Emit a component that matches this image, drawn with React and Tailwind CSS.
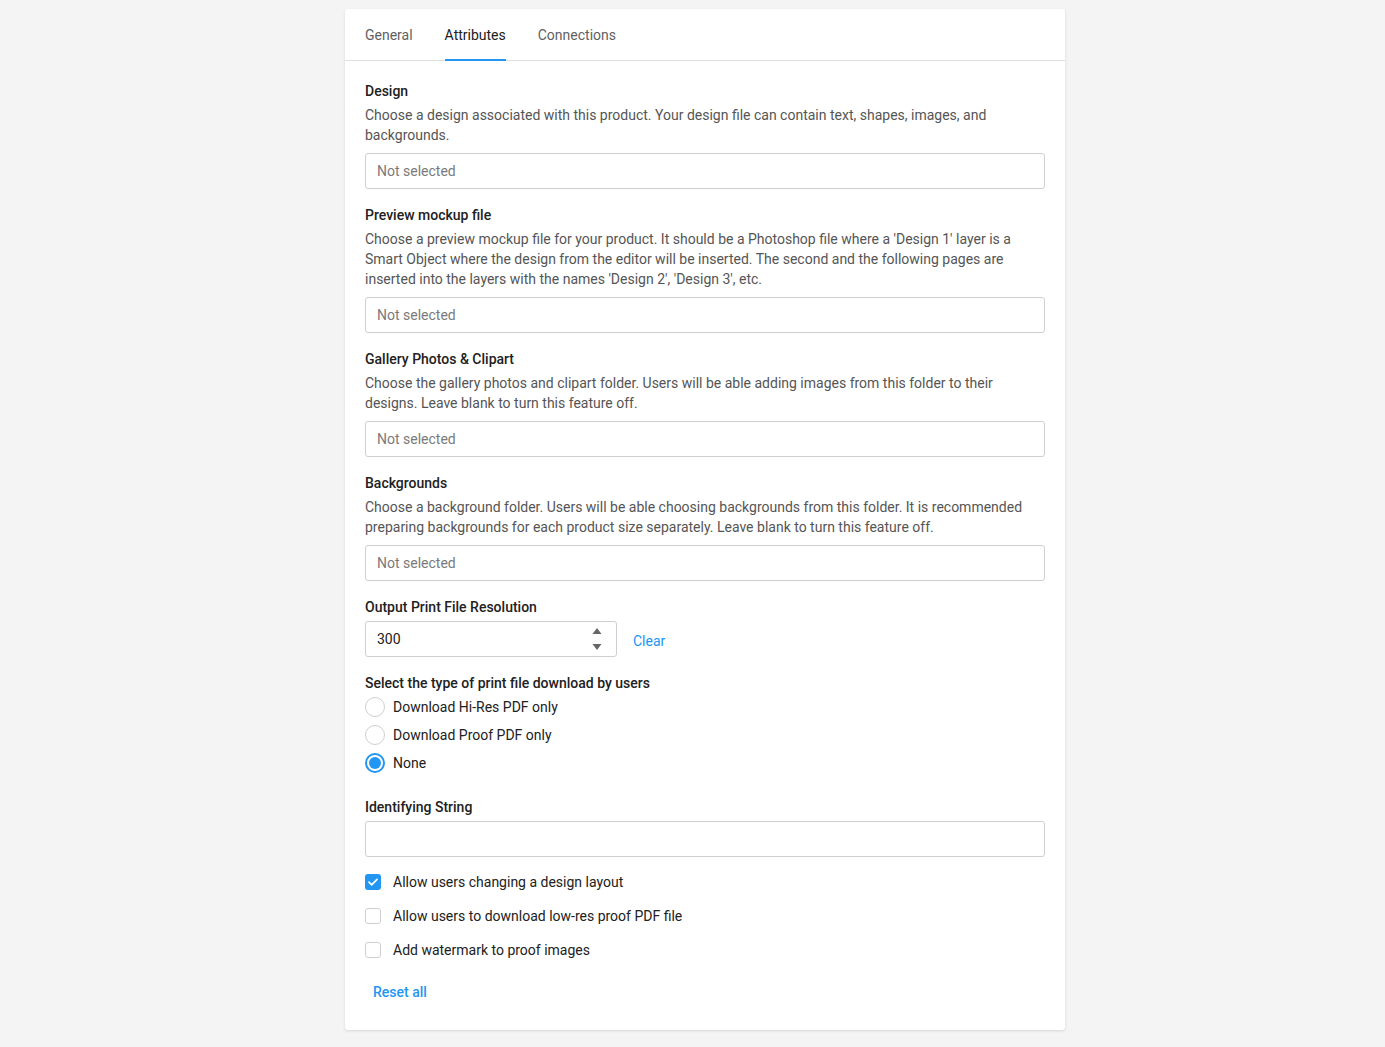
import React, { useState } from 'react';

const SECTIONS = [
  {
    title: 'Design',
    text: 'Choose a design associated with this product. Your design file can contain text, shapes, images, and backgrounds.',
  },
  {
    title: 'Preview mockup file',
    text: "Choose a preview mockup file for your product. It should be a Photoshop file where a 'Design 1' layer is a Smart Object where the design from the editor will be inserted. The second and the following pages are inserted into the layers with the names 'Design 2', 'Design 3', etc.",
  },
  {
    title: 'Gallery Photos & Clipart',
    text: 'Choose the gallery photos and clipart folder. Users will be able adding images from this folder to their designs. Leave blank to turn this feature off.',
  },
  {
    title: 'Backgrounds',
    text: 'Choose a background folder. Users will be able choosing backgrounds from this folder. It is recommended preparing backgrounds for each product size separately. Leave blank to turn this feature off.',
  },
];

const RADIOS = ['Download Hi-Res PDF only', 'Download Proof PDF only', 'None'];

const CHECKS = [
  'Allow users changing a design layout',
  'Allow users to download low-res proof PDF file',
  'Add watermark to proof images',
];

function Radio({ checked, label, onClick }) {
  return (
    <label className="flex items-center h-7 cursor-pointer" onClick={onClick}>
      {checked ? (
        <span className="w-5 h-5 rounded-full border-2 border-[#2196f3] flex items-center justify-center">
          <span className="w-3 h-3 rounded-full bg-[#2196f3]" />
        </span>
      ) : (
        <span className="w-5 h-5 rounded-full border border-[#cfcfcf] bg-white" />
      )}
      <span className="ml-2 text-[#212121]">{label}</span>
    </label>
  );
}

function Check({ checked, label, onClick }) {
  return (
    <label className="flex items-center h-[34px] cursor-pointer" onClick={onClick}>
      {checked ? (
        <span className="w-4 h-4 rounded-[3px] bg-[#2196f3] flex items-center justify-center">
          <svg width="10" height="8" viewBox="0 0 10 8" fill="none">
            <path d="M1 4.2 3.7 6.8 9 1.3" stroke="white" strokeWidth="1.7" strokeLinecap="round" strokeLinejoin="round" />
          </svg>
        </span>
      ) : (
        <span className="w-4 h-4 rounded-[3px] border border-[#cfcfcf] bg-white" />
      )}
      <span className="ml-3 text-[#212121]">{label}</span>
    </label>
  );
}

export default function App() {
  const [tab, setTab] = useState('Attributes');
  const [radio, setRadio] = useState(2);
  const [checks, setChecks] = useState([true, false, false]);

  return (
    <div className="min-h-screen bg-[#f4f4f4] pt-[9px] pb-[17px] font-['Roboto',sans-serif] text-[14px] leading-5">
      <div className="w-[720px] bg-white rounded-[3px] shadow-[0_1px_3px_rgba(0,0,0,0.12)] ml-[345px]">
        <div className="flex gap-8 px-5 h-[52px] border-b border-[#e0e0e0]">
          {['General', 'Attributes', 'Connections'].map(t => (
            <button
              key={t}
              onClick={() => setTab(t)}
              className={
                'relative h-full flex items-center ' +
                (tab === t ? 'text-[#212121]' : 'text-[#616161]')
              }
            >
              {t}
              {tab === t && <span className="absolute left-0 right-0 bottom-[-1px] h-[2px] bg-[#2196f3]" />}
            </button>
          ))}
        </div>

        <div className="px-5 pt-5 pb-[28px]">
          {SECTIONS.map(s => (
            <div key={s.title} className="mb-4">
              <div className="font-medium text-[#212121]">{s.title}</div>
              <p className="mt-1 text-[#555555]">{s.text}</p>
              <div className="mt-2 h-9 border border-[#cfcfcf] rounded-[3px] px-[11px] flex items-center text-[#7a7a7a]">
                Not selected
              </div>
            </div>
          ))}

          <div className="font-medium text-[#212121]">Output Print File Resolution</div>
          <div className="mt-1 flex items-center">
            <div className="w-[252px] h-9 border border-[#cfcfcf] rounded-[3px] pl-[11px] pr-[14px] flex items-center justify-between text-[#212121]">
              <span>300</span>
              <svg width="10" height="24" viewBox="0 0 10 24" fill="#666">
                <path d="M5 1 9.5 7H0.5Z" />
                <path d="M5 23 9.5 17H0.5Z" />
              </svg>
            </div>
            <button className="ml-4 text-[#2196f3] mt-[4px]">Clear</button>
          </div>

          <div className="mt-4 font-medium text-[#212121]">Select the type of print file download by users</div>
          <div>
            {RADIOS.map((r, i) => (
              <Radio key={r} label={r} checked={radio === i} onClick={() => setRadio(i)} />
            ))}
          </div>

          <div className="mt-5 font-medium text-[#212121]">Identifying String</div>
          <input className="mt-1 w-full h-9 border border-[#cfcfcf] rounded-[3px] px-[11px] outline-none" />

          <div className="mt-2">
            {CHECKS.map((c, i) => (
              <Check
                key={c}
                label={c}
                checked={checks[i]}
                onClick={e => {
                  e.preventDefault();
                  setChecks(checks.map((v, j) => (j === i ? !v : v)));
                }}
              />
            ))}
          </div>

          <button className="mt-[15px] ml-2 font-medium text-[#2196f3]">Reset all</button>
        </div>
      </div>
    </div>
  );
}
